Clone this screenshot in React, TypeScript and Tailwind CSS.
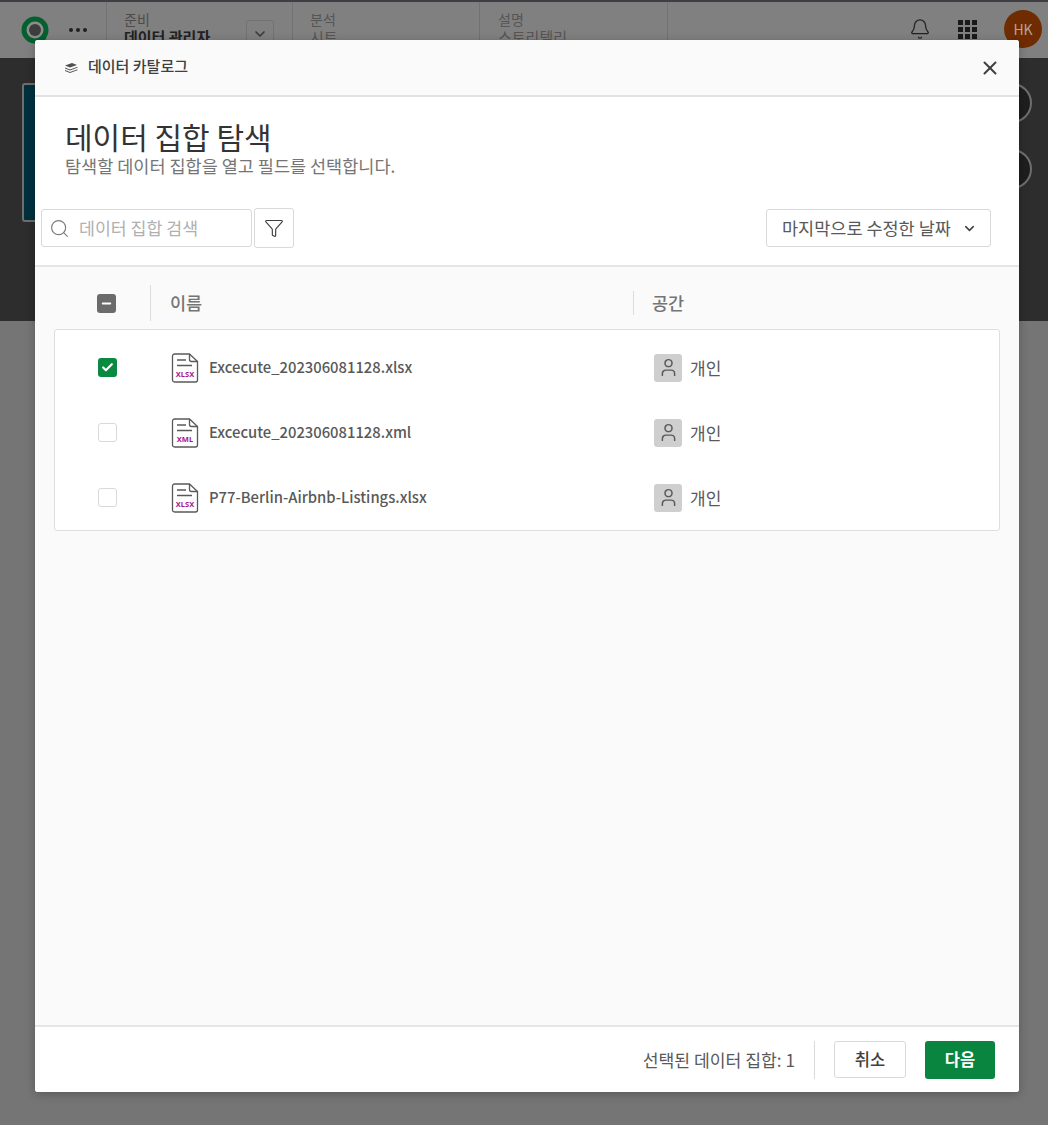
import { Check, ChevronDown, Filter, Minus, Search, User, X, Bell } from "lucide-react"

const FONT = "font-['Noto_Sans_CJK_KR','Noto_Sans',sans-serif]"

const rows = [
  { name: "Excecute_202306081128.xlsx", ext: "XLSX", checked: true },
  { name: "Excecute_202306081128.xml", ext: "XML", checked: false },
  { name: "P77-Berlin-Airbnb-Listings.xlsx", ext: "XLSX", checked: false },
]

function FileIcon({ ext }: { ext: string }) {
  return (
    <svg width="28" height="30" viewBox="0 0 28 30" fill="none" className="shrink-0">
      <path d="M3.5 1h15l8 7.5V27a2 2 0 0 1-2 2h-21a2 2 0 0 1-2-2V3a2 2 0 0 1 2-2Z" stroke="#595959" strokeWidth="1.3" />
      <path d="M18.5 1v5.5a2 2 0 0 0 2 2h6" stroke="#595959" strokeWidth="1.3" />
      <path d="M6 7h9M6 12.5h15" stroke="#595959" strokeWidth="1.3" />
      <text x="14" y="24" textAnchor="middle" fontSize="7.5" fontWeight="700" fill="#a5168c" fontFamily="Noto Sans, sans-serif">
        {ext}
      </text>
    </svg>
  )
}

function TopBar() {
  return (
    <div className="h-[58px] bg-[#808080] border-t-2 border-[#3e3e44] flex items-start text-[#3a3a3a]">
      <div className="w-[107px] h-full flex items-center pl-[21px] gap-[20px] border-r border-[#727272]">
        <svg width="28" height="28" viewBox="0 0 28 28">
          <circle cx="14" cy="14" r="11" fill="#8c8c8c" stroke="#04602f" strokeWidth="5" />
          <circle cx="14" cy="14" r="6" fill="#3d3d3d" />
          <path d="M20 20l4 4" stroke="#04602f" strokeWidth="4" />
        </svg>
        <span className="flex gap-[3px]">
          <i className="size-[4px] rounded-full bg-[#1f1f1f]" />
          <i className="size-[4px] rounded-full bg-[#1f1f1f]" />
          <i className="size-[4px] rounded-full bg-[#1f1f1f]" />
        </span>
      </div>
      <div className="w-[186px] h-full pl-[17px] pt-[9px] relative border-r border-[#727272] text-[14px] leading-[16px]">
        <div className="text-[#4c4c4c]">준비</div>
        <div className="mt-[2px] font-bold text-[15px] text-[#222]">데이터 관리자</div>
        <span className="absolute left-[139px] top-[18px] size-[28px] rounded-[3px] border border-[#727272] flex items-center justify-center">
          <ChevronDown size={16} strokeWidth={2.5} />
        </span>
      </div>
      <div className="w-[187px] h-full pl-[17px] pt-[9px] border-r border-[#727272] text-[14px] leading-[16px] text-[#555]">
        <div>분석</div>
        <div className="mt-[2px] text-[15px]">시트</div>
      </div>
      <div className="w-[188px] h-full pl-[18px] pt-[9px] border-r border-[#727272] text-[14px] leading-[16px] text-[#555]">
        <div>설명</div>
        <div className="mt-[2px] text-[15px]">스토리텔리</div>
      </div>
      <div className="flex-1 h-full flex items-center justify-end pr-[6px] pb-[2px]">
        <Bell size={22} strokeWidth={1.4} className="text-[#222] mr-[27px]" />
        <div className="grid grid-cols-3 gap-[2px] mr-[27px]">
          {Array.from({ length: 9 }).map((_, i) => (
            <i key={i} className="size-[5px] bg-[#1a1a1a]" />
          ))}
        </div>
        <div className="size-[38px] rounded-full bg-[#6f2c00] text-[#b5a499] text-[14px] flex items-center justify-center">HK</div>
      </div>
    </div>
  )
}

function Backdrop() {
  return (
    <>
      <TopBar />
      <div className="h-[263px] bg-[#2d2d2d] pt-[25px] pl-[22px] pr-[16px] flex justify-between items-start">
        <div className="w-[60px] h-[139px] rounded-[3px] border-2 border-[#6e6e6e] bg-[#00303d]" />
        <div className="flex flex-col gap-[26px]">
          <div className="size-[40px] rounded-full border-2 border-[#6e6e6e] bg-[#1e1e1e]" />
          <div className="size-[40px] rounded-full border-2 border-[#6e6e6e] bg-[#1e1e1e]" />
        </div>
      </div>
      <div className="h-[804px] bg-[#757575]" />
    </>
  )
}

export default function App() {
  return (
    <div className={`relative w-[1048px] h-[1125px] overflow-hidden ${FONT}`}>
      <Backdrop />

      <div className="absolute left-[35px] top-[40px] w-[984px] h-[1052px] rounded-[3px] bg-white flex flex-col shadow-[0_2px_10px_rgba(0,0,0,0.25)]">
        <div className="h-[57px] shrink-0 bg-[#fafafa] border-b-2 border-[#e2e2e2] rounded-t-[3px] flex items-center pl-[29px] pr-[18px]">
          <svg width="16" height="12" viewBox="0 0 16 12" className="mr-[8px]" fill="#505050">
            <path d="M1 3.5 8 1l5 2-7 2.6L1 3.5Z" />
            <path d="M1 5.6 6 7.6l7-2.6 1 .5-8 3L1 6.5v-.9Z" />
            <path d="M1 8 6 10l7-2.6 1 .6-8 3L1 9V8Z" />
          </svg>
          <span className="text-[15px] font-medium text-[#404040] pb-[2px]">데이터 카탈로그</span>
          <X size={22} strokeWidth={2.2} className="ml-auto text-[#404040]" />
        </div>

        <div className="h-[170px] shrink-0 bg-white border-b-2 border-[#e6e6e6] flex flex-col">
          <div className="pl-[30px] pt-[19px]">
            <h1 className="text-[30px] leading-[40px] font-normal text-[#333]">데이터 집합 탐색</h1>
            <p className="text-[17.5px] leading-[20px] text-[#757575]">탐색할 데이터 집합을 열고 필드를 선택합니다.</p>
          </div>
          <div className="flex items-center pl-[6px] pr-[28px] mt-[32px]">
            <div className="w-[211px] h-[38px] rounded-[3px] border border-[#d9d9d9] flex items-center pl-[7px] gap-[9px]">
              <Search size={21} strokeWidth={1.3} className="text-[#7a7a7a]" />
              <span className="text-[17.3px] text-[#b0b0b0]">데이터 집합 검색</span>
            </div>
            <div className="ml-[2px] size-[40px] rounded-[3px] border border-[#d9d9d9] flex items-center justify-center">
              <Filter size={20} strokeWidth={1.4} className="text-[#404040]" />
            </div>
            <div className="ml-auto w-[225px] h-[38px] rounded-[3px] border border-[#d9d9d9] flex items-center pl-[15px] gap-[11px]">
              <span className="text-[17.5px] text-[#595959]">마지막으로 수정한 날짜</span>
              <ChevronDown size={15} strokeWidth={2.4} className="text-[#404040]" />
            </div>
          </div>
        </div>

        <div className="flex-1 bg-[#fafafa] pl-[19px] pr-[19px]">
          <div className="h-[62px] pt-[10px] flex items-center">
            <div className="w-[97px] h-[36px] flex items-center pl-[43px] border-r border-[#dcdcdc]">
              <span className="size-[19px] rounded-[3px] bg-[#6b6b6b] flex items-center justify-center">
                <Minus size={13} strokeWidth={3.5} className="text-white" />
              </span>
            </div>
            <span className="w-[482px] h-[24px] pl-[19px] text-[17.5px] leading-[24px] font-medium text-[#757575]">이름</span>
            <span className="h-[24px] pl-[18px] border-l border-[#dcdcdc] text-[17.5px] leading-[24px] font-medium text-[#757575]">공간</span>
          </div>

          <div className="h-[202px] rounded-[3px] border border-[#dedede] bg-white py-[5px]">
            {rows.map((r) => (
              <div key={r.name} className="h-[65px] flex items-center">
                <div className="w-[116px] pl-[43px] shrink-0">
                  {r.checked ? (
                    <span className="size-[19px] rounded-[3px] bg-[#0a8a41] flex items-center justify-center">
                      <Check size={13} strokeWidth={4} className="text-white" />
                    </span>
                  ) : (
                    <span className="block size-[19px] rounded-[3px] border border-[#d9d9d9] bg-white" />
                  )}
                </div>
                <FileIcon ext={r.ext} />
                <span className="w-[445px] ml-[10px] text-[14.8px] font-medium text-[#595959]">{r.name}</span>
                <span className="size-[28px] rounded-[3px] bg-[#cfcfcf] flex items-center justify-center">
                  <User size={21} strokeWidth={1.7} className="text-[#595959]" />
                </span>
                <span className="ml-[8px] text-[17px] text-[#595959]">개인</span>
              </div>
            ))}
          </div>
        </div>

        <div className="h-[67px] shrink-0 bg-white border-t-2 border-[#e6e6e6] rounded-b-[3px] flex items-center justify-end pr-[24px]">
          <span className="text-[17.2px] text-[#595959]">선택된 데이터 집합: 1</span>
          <span className="w-px h-[38px] bg-[#d9d9d9] ml-[19px] mr-[19px]" />
          <span className="w-[72px] h-[37px] rounded-[3px] border border-[#d9d9d9] bg-white flex items-center justify-center text-[16.5px] font-medium text-[#404040]">취소</span>
          <span className="w-[70px] h-[38px] ml-[19px] rounded-[3px] bg-[#0a8540] flex items-center justify-center text-[16.5px] font-bold text-white">다음</span>
        </div>
      </div>
    </div>
  )
}
